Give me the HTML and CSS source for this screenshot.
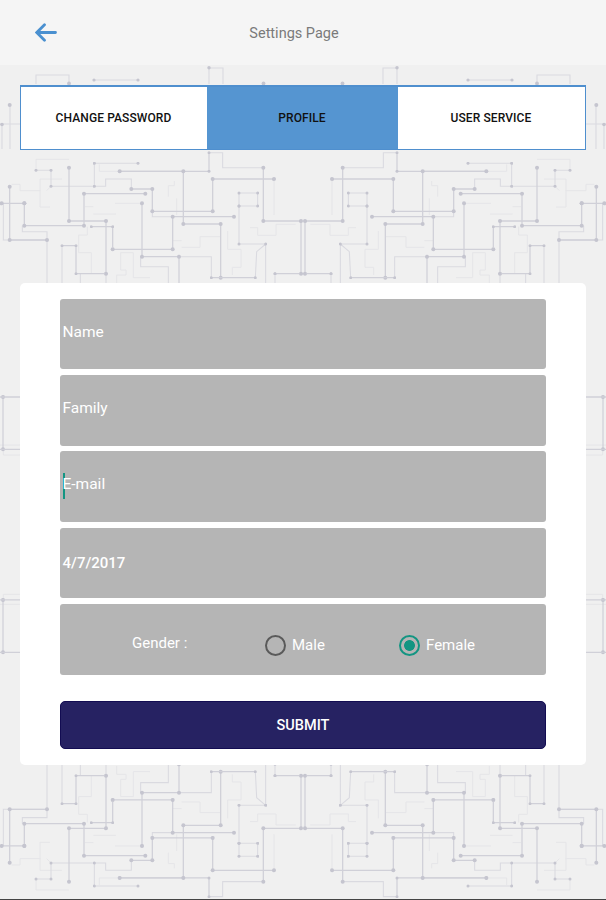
FILE: index.html
```html
<!DOCTYPE html>
<html lang="en">
  <head>
    <meta charset="UTF-8" />
    <meta name="viewport" content="width=device-width, initial-scale=1.0" />
    <title>Settings Page</title>
    <link rel="stylesheet" href="styles.css">
  </head>
  <body>
    <div class="screen">
      <!-- circuit pattern: one quarter, mirrored both ways -->
      <svg class="pattern" viewBox="0 0 606 900" aria-hidden="true">
        <defs>
          <marker id="dot" markerUnits="userSpaceOnUse" markerWidth="14" markerHeight="14" refX="7" refY="7">
            <circle class="dot" cx="7" cy="7" r="6" />
          </marker>
          <marker id="dot-small" markerUnits="userSpaceOnUse" markerWidth="10" markerHeight="10" refX="5" refY="5">
            <circle class="dot" cx="5" cy="5" r="4.5" />
          </marker>
          <g id="quarter" transform="translate(0 145) scale(0.33333)">
            <g class="wire faint">
              <path d="M108 76V43H207M822 102V210M345 175H426M280 207H348M255 185H280" />
              <path d="M186 102H120V186H150M35 118H60V137H122M153 124L140 137" />
              <path d="M262 245V270H236V323H274V385M450 398H400V323H362V375H378V390H350V415" />
              <path d="M518 287H545M545 307H600V275H662M683 258V313H723V367H697V390" />
              <path d="M750 248H773V271H828V238H887M530 160V210M505 155V122H523V108" />
              <path d="M298 58V79H359M0 900H60M10 913V930H60" />
            </g>
            <g class="wire">
              <path d="M67 242V260H141V420M10 175V285H141M241 386V420M186 302V420M318 386V420" />
              <path d="M283 124H317V102H394V132M457 199V215H518M627 23H668V68H790" />
              <path d="M422 335V365H505V420M537 335H634V398M797 297V420M766 398L770 320L797 297" />
              <path class="small" d="M108 76H153V124H283V55H414" />
              <path class="small" d="M797 297H717V183H773V144H717V183M825 420V386" />
            </g>
            <g class="wire strong">
              <path class="big" d="M5 175H73M29 125V285H141" />
              <path class="big" d="M73 175V242H252V146H436M207 68V228H318V386" />
              <path class="small" d="M318 386H228V302H186" />
              <path class="big" d="M394 132H457V199H638V102H822" />
              <path class="small" d="M359 79H627V23" />
              <path class="big" d="M359 79H550V237H662V398M790 68V228H903V386" />
              <path class="small" d="M903 386H825M634 398H766" />
              <path class="big" d="M426 175V335H537V420M338 313H518V215H702" />
              <path class="small" d="M274 245H338V313" />
              <path class="big" d="M9 756V913" />
              <path d="M0 756H60M0 913H60" />
            </g>
          </g>
          <g id="top-strip">
            <g class="wire-px">
              <path d="M209 84V68H223V84M94 80H138M36 84V75H69V84M10 105V149M0 124H20M2 124V149" />
            </g>
            <g class="dot">
              <circle cx="209" cy="67.7" r="1.7" />
              <circle cx="94" cy="80" r="1.6" />
              <circle cx="138" cy="80" r="1.6" />
              <circle cx="69" cy="83.5" r="1.9" />
              <circle cx="263.5" cy="83.5" r="1.9" />
              <circle cx="9.7" cy="105" r="2" />
              <circle cx="2" cy="124.5" r="1.8" />
            </g>
          </g>
          <g id="half">
            <use href="#quarter" />
            <use href="#quarter" transform="translate(0 1049.3) scale(1 -1)" />
            <use href="#top-strip" />
          </g>
        </defs>
        <use href="#half" />
        <use href="#half" transform="translate(606 0) scale(-1 1)" />
      </svg>

      <div class="content">
        <header class="header">
          <a class="back" href="#" aria-label="Back">
            <svg width="22" height="19" viewBox="0 0 22 19">
              <path d="M20.5 9.5H2M9.5 1.8L1.8 9.5L9.5 17.2" />
            </svg>
          </a>
          <h1 class="title">Settings Page</h1>
        </header>

        <nav class="tabs">
          <a class="tab" href="#">CHANGE PASSWORD</a>
          <a class="tab active" href="#">PROFILE</a>
          <a class="tab" href="#">USER SERVICE</a>
        </nav>

        <form class="card">
          <div class="field"><span>Name</span></div>
          <div class="field"><span>Family</span></div>
          <div class="field focused"><span>E-mail</span></div>
          <div class="field date"><span>4/7/2017</span></div>
          <div class="field gender">
            <span class="gender-label">Gender :</span>
            <label class="option male"><i class="radio"></i>Male</label>
            <label class="option"><i class="radio checked"></i>Female</label>
          </div>
          <button class="submit" type="button">SUBMIT</button>
        </form>
      </div>
    </div>
  </body>
</html>
```

FILE: styles.css
```css
* {
  box-sizing: border-box;
}
body {
  margin: 0;
  background: #f0f0f0;
  font-family: Roboto, sans-serif;
}
.screen {
  display: grid;
  width: 606px;
  height: 900px;
  overflow: hidden;
  border-bottom: 1px solid #444;
}
.pattern,
.content {
  grid-area: 1 / 1;
}
.pattern {
  width: 606px;
  height: 900px;
}
.content {
  z-index: 1;
}

/* Pattern */
.wire,
.wire-px {
  fill: none;
  stroke: #dadae0;
  stroke-width: 3.2;
}
.wire-px {
  stroke-width: 1.1;
}
.faint {
  stroke: #e5e5e8;
  stroke-width: 3;
}
.strong {
  stroke: #d0d0d8;
  stroke-width: 3.8;
}
.dot {
  fill: #c5c5cf;
}
.big {
  marker: url(#dot);
}
.small {
  marker: url(#dot-small);
}

/* Header */
.header {
  display: grid;
  grid-template-columns: 100px 1fr 100px;
  align-items: center;
  height: 65px;
  background: #f5f5f5;
}
.back {
  height: 19px;
  padding-left: 35px;
}
.back svg {
  display: block;
  fill: none;
  stroke: #4a90d0;
  stroke-width: 2.8;
  stroke-linecap: round;
}
.title {
  margin: 0;
  padding: 2px 18px 0 0;
  color: #7a7a7a;
  font-size: 14.5px;
  font-weight: 400;
  text-align: center;
}

/* Tabs */
.tabs {
  display: grid;
  grid-template-columns: 186px 191px 1fr;
  width: 566px;
  height: 65px;
  margin: 20px 0 0 20px;
  border: 1px solid #4f8fce;
  border-top-width: 2px;
  background: #fff;
}
.tab {
  display: flex;
  align-items: center;
  justify-content: center;
  padding: 0 1px 1px 0;
  color: #111;
  font-size: 12px;
  font-weight: 500;
  letter-spacing: 0.1px;
  text-decoration: none;
}
.tab.active {
  background: #5595d1;
}

/* Profile form */
.card {
  width: 566px;
  height: 482px;
  margin: 133px 0 0 20px;
  padding: 15.5px 40px 0;
  border-radius: 5px;
  background: #fff;
}
.field {
  display: flex;
  align-items: center;
  height: 70.8px;
  margin-bottom: 5.6px;
  padding: 0 0 4px 2.5px;
  border-radius: 3px;
  background: #b5b5b5;
  color: #fff;
  font-size: 15.5px;
}
.focused {
  padding-bottom: 5px;
}
.focused::before {
  content: '';
  width: 2px;
  height: 26px;
  margin: 4px -2px 0 0;
  background: #139582;
}
.date {
  padding-bottom: 0;
  font-size: 15px;
  font-weight: 500;
}
.gender {
  padding: 12px 0 0 72px;
  font-size: 15px;
}
.gender-label {
  width: 133px;
  padding-bottom: 5px;
}
.option {
  display: flex;
  align-items: center;
  gap: 6px;
}
.male {
  width: 134px;
}
.radio {
  width: 21px;
  height: 21px;
  border: 2px solid #5a5a5a;
  border-radius: 50%;
}
.radio.checked {
  border-color: #139582;
  background: radial-gradient(circle, #139582 5px, transparent 5.8px);
}
.submit {
  display: block;
  width: 486px;
  height: 48px;
  margin-top: 26px;
  padding-top: 3px;
  border: 1px solid #120c52;
  border-radius: 5px;
  background: #262262;
  color: #fff;
  font-family: Roboto, sans-serif;
  font-size: 14.5px;
  font-weight: 500;
}
```
